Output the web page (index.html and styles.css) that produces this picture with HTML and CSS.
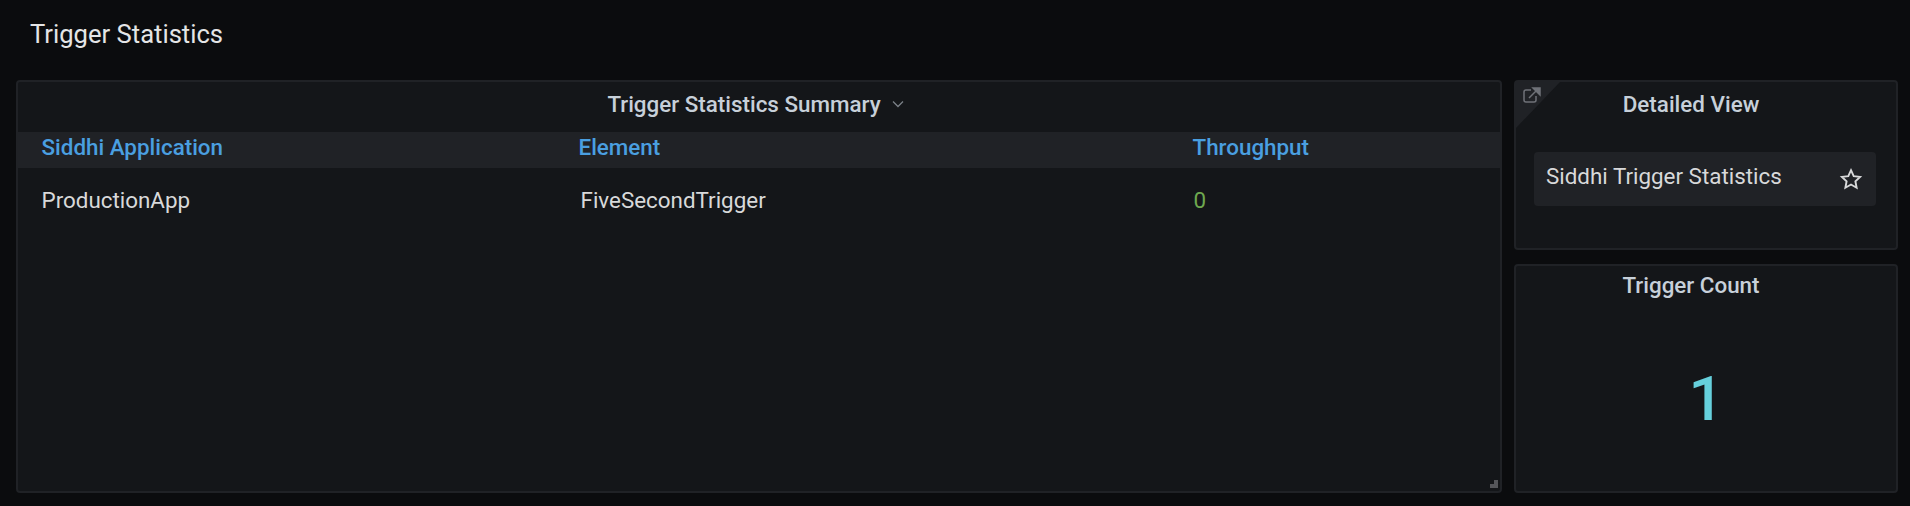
FILE: index.html
```html
<!DOCTYPE html>
<html>

<head>
  <title>Trigger Statistics</title>
  <link rel="stylesheet" href="styles.css">
</head>

<body>
  <h1 class="page-title">Trigger Statistics</h1>
  <div class="dashboard">
    <section class="panel summary">
      <div class="panel-title">
        <span>Trigger Statistics Summary</span>
        <svg class="chevron" viewBox="0 0 12 8" width="12" height="8">
          <path d="M1 1.5l5 5 5-5" fill="none" stroke="#7b8087" stroke-width="1.3" />
        </svg>
      </div>
      <div class="table-row table-head">
        <span>Siddhi Application</span>
        <span>Element</span>
        <span>Throughput</span>
      </div>
      <div class="table-row table-body">
        <span>ProductionApp</span>
        <span>FiveSecondTrigger</span>
        <span class="value-ok">0</span>
      </div>
      <div class="resize-handle"></div>
    </section>
    <div class="side">
      <section class="panel detail">
        <div class="corner"></div>
        <svg class="corner-icon" viewBox="0 0 18 16" width="18" height="16">
          <path d="M8 3H3a2 2 0 0 0-2 2v8a2 2 0 0 0 2 2h8a2 2 0 0 0 2-2V9" fill="none" stroke="#6f7278" stroke-width="1.5" />
          <path d="M6 11L14 3M10 1h7v7z" fill="#6f7278" stroke="#6f7278" stroke-width="1.5" />
        </svg>
        <div class="panel-title">Detailed View</div>
        <div class="dash-link">
          <span>Siddhi Trigger Statistics</span>
          <svg viewBox="0 0 24 24" width="24" height="24">
            <path d="M12 3.2l2.7 5.9 6.4.8-4.7 4.4 1.2 6.4-5.6-3.2-5.6 3.2 1.2-6.4-4.7-4.4 6.4-.8z" fill="none" stroke="#d8d9da" stroke-width="1.9" stroke-linejoin="miter" />
          </svg>
        </div>
      </section>
      <section class="panel count">
        <div class="panel-title">Trigger Count</div>
        <div class="stat">1</div>
      </section>
    </div>
  </div>
</body>

</html>
```

FILE: styles.css
```css
body {
  margin: 0;
  height: 506px;
  overflow: hidden;
  background-color: #0b0c0e;
  color: #d8d9da;
  font-family: Roboto, sans-serif;
}

.page-title {
  margin: 0;
  padding: 19px 0 0 30px;
  height: 80px;
  box-sizing: border-box;
  font-size: 25.6px;
  line-height: 30px;
  font-weight: 400;
  color: #e4e5e6;
}

.dashboard {
  display: flex;
  gap: 12px;
  height: 413px;
  padding: 0 12px 0 16px;
}

.panel {
  position: relative;
  box-sizing: border-box;
  background-color: #141619;
  border: 2px solid #202226;
  border-radius: 4px;
}

.summary {
  flex: 1;
}

.side {
  width: 384px;
  display: flex;
  flex-direction: column;
  gap: 14px;
}

.detail {
  height: 170px;
}

.count {
  flex: 1;
}

.panel-title {
  display: flex;
  justify-content: center;
  align-items: center;
  gap: 11px;
  height: 50px;
  padding-bottom: 7px;
  box-sizing: border-box;
  font-size: 22.4px;
  font-weight: 500;
  color: #c7d0d9;
}

.summary .panel-title {
  padding-right: 7px;
}

.side .panel-title {
  padding-right: 30px;
}

.count .panel-title {
  height: 44px;
}

.table-row {
  display: grid;
  grid-template-columns: 537px 614px 1fr;
  padding-left: 23.5px;
  font-size: 22.4px;
}

.table-head {
  height: 36px;
  padding-bottom: 6px;
  box-sizing: border-box;
  align-items: center;
  background-color: #202226;
  color: #4a9fe0;
  font-weight: 500;
}

.table-body {
  grid-template-columns: 539px 613px 1fr;
  height: 64px;
  align-items: center;
  color: #d8d9da;
}

.value-ok {
  color: #6ea84f;
}

.resize-handle {
  position: absolute;
  right: 2px;
  bottom: 3px;
  width: 8px;
  height: 8px;
  background-color: #55565a;
  clip-path: polygon(50% 0, 100% 0, 100% 100%, 0 100%, 0 50%, 50% 50%);
}

.corner {
  position: absolute;
  top: 0;
  left: 0;
  width: 44px;
  height: 46px;
  background-color: #202226;
  clip-path: polygon(0 0, 100% 0, 0 100%);
}

.corner-icon {
  position: absolute;
  top: 5px;
  left: 7px;
}

.dash-link {
  display: flex;
  justify-content: space-between;
  align-items: center;
  box-sizing: border-box;
  height: 54px;
  margin: 20px 20px 0 18px;
  padding: 0 13px 7px 12px;
  border-radius: 4px;
  background-color: #202226;
  font-size: 22.4px;
}

.dash-link svg {
  position: relative;
  top: 3px;
}

.stat {
  margin-top: 53px;
  text-align: center;
  font-size: 62px;
  line-height: 72px;
  font-weight: 500;
  color: #66d0dc;
}
```
